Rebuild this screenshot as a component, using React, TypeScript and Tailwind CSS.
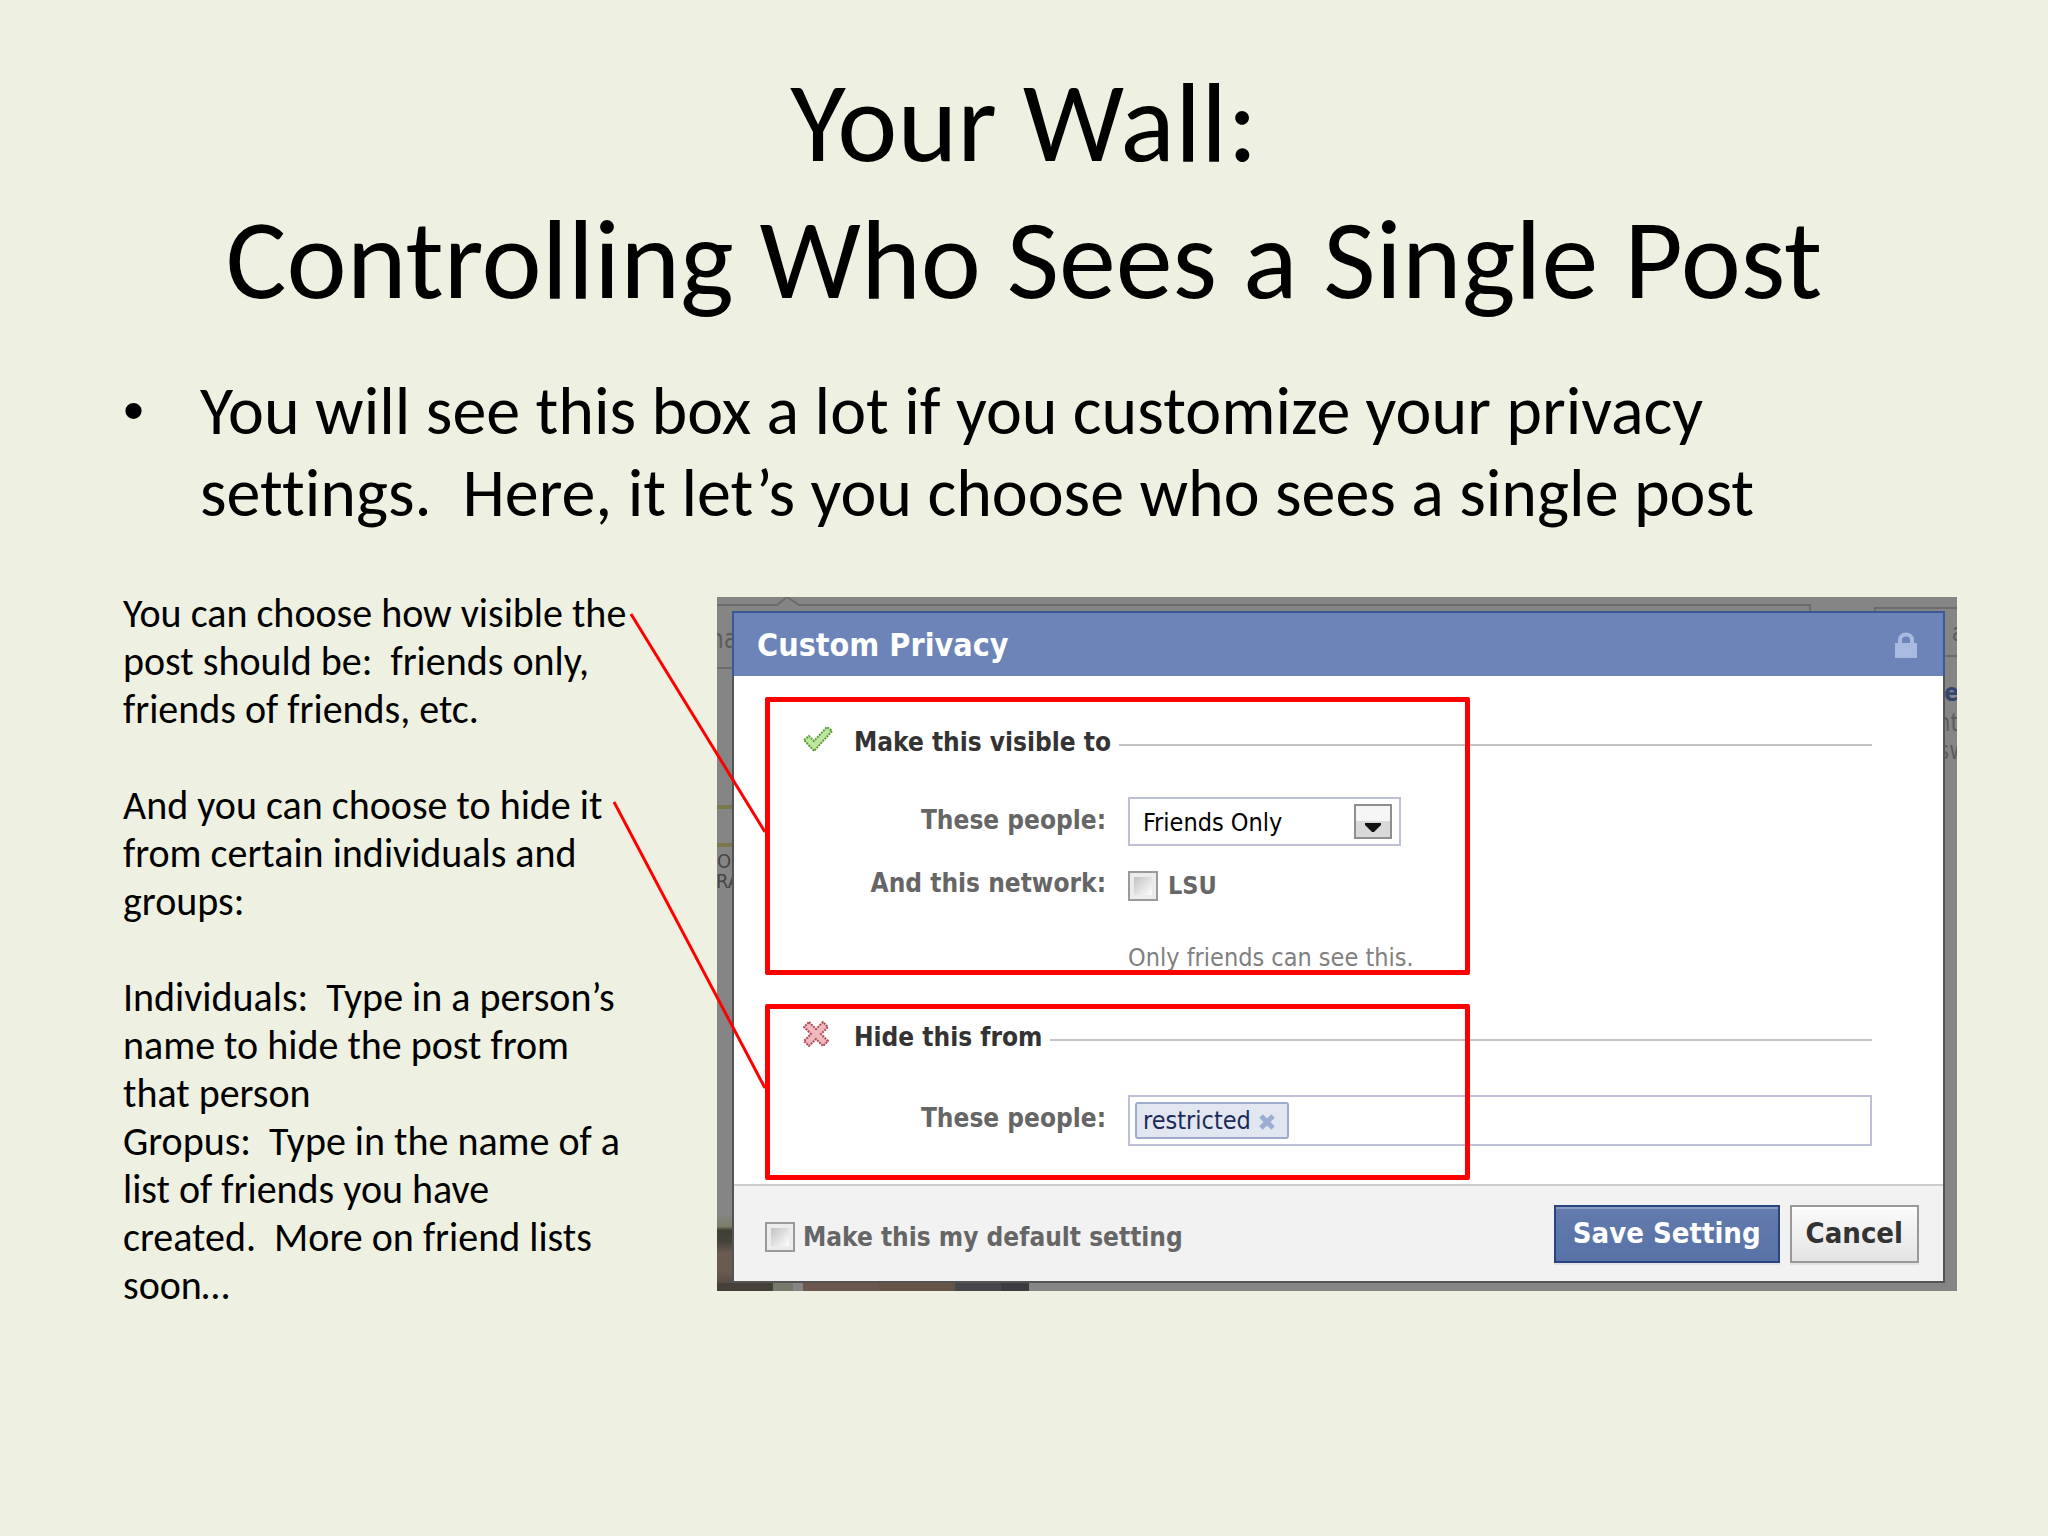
import type { ReactNode } from "react";

const SLIDE_FONT = "font-[Carlito,Calibri,Lato,sans-serif]";
const DIALOG_FONT = "font-['DejaVu_Sans_Condensed','DejaVu_Sans',Tahoma,sans-serif]";

const notes = [
  "You can choose how visible the",
  "post should be:  friends only,",
  "friends of friends, etc.",
  "",
  "And you can choose to hide it",
  "from certain individuals and",
  "groups:",
  "",
  "Individuals:  Type in a person’s",
  "name to hide the post from",
  "that person",
  "Gropus:  Type in the name of a",
  "list of friends you have",
  "created.  More on friend lists",
  "soon…",
];

function CheckIcon() {
  return (
    <svg className="h-[26px] w-[30px] shrink-0" viewBox="0 0 30 26" aria-hidden="true">
      <path d="M1 14 L6 10 L11 15 L24 1 L29 5 L11 25 Z" fill="#bfe6a0" />
      <path d="M1 14 L6 10 L11 15 L24 1 L29 5 L11 25 Z" fill="none" stroke="#5a9e35" strokeWidth="2" strokeDasharray="2 1" />
    </svg>
  );
}

function CrossIcon() {
  const d = "M6 1 L13 8 L20 1 L25 6 L18 13 L25 20 L20 25 L13 18 L6 25 L1 20 L8 13 L1 6 Z";
  return (
    <svg className="mr-1 h-[26px] w-[26px] shrink-0" viewBox="0 0 26 26" aria-hidden="true">
      <path d={d} fill="#efb9bd" />
      <path d={d} fill="none" stroke="#b04a55" strokeWidth="2" strokeDasharray="2 1" />
    </svg>
  );
}

function LockIcon() {
  return (
    <svg className="h-[26px] w-[22px]" viewBox="0 0 22 26" aria-hidden="true">
      <path d="M5 13 V8 C5 0.5 17 0.5 17 8 V13" fill="none" stroke="#a9bae0" strokeWidth="4" />
      <rect x="0" y="11" width="22" height="15" fill="#a9bae0" />
    </svg>
  );
}

function CheckBox({ id }: { id: string }) {
  return (
    <input
      id={id}
      type="checkbox"
      className="size-[30px] shrink-0 appearance-none border-2 border-[#9a9a9a] bg-[linear-gradient(135deg,#b4b4b4,#fafafa_80%)] shadow-[inset_0_0_0_4px_#ececec]"
    />
  );
}

function SectionHeading({ icon, children }: { icon: ReactNode; children: ReactNode }) {
  return (
    <div className="flex items-start pl-[38px]">
      {icon}
      <h3 className="ml-[21px] text-[26px] leading-8 font-bold text-[#333]">{children}</h3>
      <div className="mt-[18px] ml-2 h-[2px] flex-1 bg-[#c4c4c4]" />
    </div>
  );
}

/* Red frame over a section plus the leader line that ties it to the notes. */
function Callout({ width, height, top }: { width: number; height: number; top: string }) {
  return (
    <>
      <div className="pointer-events-none absolute inset-y-0 left-0 w-[705px] rounded-[2px] border-[5px] border-[#ff0000]" />
      <svg
        className={`pointer-events-none absolute right-full ${top}`}
        width={width}
        height={height}
        viewBox={`0 0 ${width} ${height}`}
        aria-hidden="true"
      >
        <line x1="1" y1="1" x2={width} y2={height - 1} stroke="#ff0000" strokeWidth="3" />
      </svg>
    </>
  );
}

/* Dimmed page that shows round the dialog. */
function Backdrop() {
  return (
    <div className="absolute inset-0 overflow-hidden bg-[#858585] text-[#5c5c5c]" aria-hidden="true">
      <svg className="absolute top-0 left-0 h-4 w-[1095px]" viewBox="0 0 1095 16">
        <path d="M0 8 H60 L70 0 L82 8 H1093 V16" fill="none" stroke="#6c6c6c" strokeWidth="2" />
      </svg>
      <div className="absolute top-[10px] right-0 h-4 w-[83px] border-t-2 border-l-2 border-[#6c6c6c]" />
      <span className="absolute top-[26px] left-[-8px] text-[26px] leading-8">na</span>
      <div className="absolute top-[70px] left-0 h-[2px] w-4 bg-[#6c6c6c]" />
      <div className="absolute top-[208px] left-0 h-1 w-4 bg-[#7c784e]" />
      <div className="absolute top-[246px] left-0 h-1 w-4 bg-[#7c784e]" />
      <span className="absolute top-[254px] left-0 text-[20px] leading-5 text-[#454545]">O</span>
      <span className="absolute top-[274px] left-[-1px] text-[20px] leading-5 text-[#454545]">RA</span>
      <span className="absolute top-[22px] right-[-8px] text-[24px] leading-7">a</span>
      <div className="absolute top-[58px] right-0 h-[2px] w-3 bg-[#6c6c6c]" />
      <span className="absolute top-[82px] right-[-2px] text-[24px] leading-7 font-bold text-[#34456e]">e</span>
      <span className="absolute top-[112px] right-[-2px] text-[24px] leading-7">nt</span>
      <span className="absolute top-[140px] right-[-10px] text-[24px] leading-7">sw</span>
      <div className="absolute bottom-0 left-0 h-[76px] w-4 bg-[linear-gradient(#858585,#7c7e68_15%,#3f3f36_20%,#45423a_35%,#6a5a50_50%,#6a5a50_75%,#4a443c)]" />
      <div className="absolute bottom-0 left-0 flex h-[8px]">
        <div className="w-[56px] bg-[#45413a]" />
        <div className="mr-[10px] w-[20px] bg-[#77786c]" />
        <div className="w-[76px] bg-[#6b5650]" />
        <div className="w-[76px] bg-[#665448]" />
        <div className="w-[46px] bg-[#47474b]" />
        <div className="w-[28px] bg-[#3c3c40]" />
      </div>
    </div>
  );
}

function PrivacyDialog() {
  return (
    <section className={`relative mt-[7px] min-w-0 flex-1 pt-[14px] pr-3 pb-2 pl-[15px] ${DIALOG_FONT}`}>
      <Backdrop />
      <form className="relative border-2 border-t-0 border-[#545454] bg-white">
        <header className="-mx-[2px] flex h-[65px] items-center justify-between border-2 border-b-0 border-[#3b5998] bg-[#6d84b8] pr-[26px] pl-[23px]">
          <h2 className="text-[32px] leading-10 font-bold text-white">Custom Privacy</h2>
          <LockIcon />
        </header>

        <div className="flex flex-col gap-[29px] pt-[21px] pr-[71px] pb-1 pl-[31px]">
          <div className="relative pt-[29px] pb-[2px]">
            <SectionHeading icon={<CheckIcon />}>Make this visible to</SectionHeading>
            <div className="mt-[39px] grid grid-cols-[341px_1fr] gap-x-[22px]">
              <label htmlFor="audience" className="mt-[7px] text-right text-[26px] leading-8 font-bold text-[#666]">
                These people:
              </label>
              <div className="relative w-[273px]">
                <select
                  id="audience"
                  className="block h-[49px] w-full appearance-none border-2 border-[#bdc0d6] bg-white pt-[2px] pl-[13px] text-[25px] text-black"
                >
                  <option>Friends Only</option>
                </select>
                <div className="pointer-events-none absolute top-[7px] right-[9px] flex h-[35px] w-[38px] items-end justify-center border-2 border-[#8f8f8f] bg-[linear-gradient(#f6f6f6_50%,#d9d9d9_50%)] pb-[5px]">
                  <svg className="h-[9px] w-4" viewBox="0 0 16 9" aria-hidden="true">
                    <path d="M0 0 H16 V2 L9 9 H7 L0 2 Z" fill="#111" />
                  </svg>
                </div>
              </div>
            </div>
            <div className="mt-[21px] grid h-[35px] grid-cols-[341px_1fr] gap-x-[22px]">
              <span className="text-right text-[26px] leading-8 font-bold text-[#666]">And this network:</span>
              <div className="flex items-center gap-[10px] self-end">
                <CheckBox id="network" />
                <label htmlFor="network" className="text-[25px] leading-8 font-bold text-[#666]">
                  LSU
                </label>
              </div>
            </div>
            <p className="mt-[41px] ml-[363px] text-[25px] leading-[30px] text-[#808080]">Only friends can see this.</p>
            <Callout width={135} height={220} top="top-[-84px]" />
          </div>

          <div className="relative pt-[17px] pb-[34px]">
            <SectionHeading icon={<CrossIcon />}>Hide this from</SectionHeading>
            <div className="mt-[42px] grid grid-cols-[341px_1fr] gap-x-[22px]">
              <label htmlFor="hidden-from" className="mt-[7px] text-right text-[26px] leading-8 font-bold text-[#666]">
                These people:
              </label>
              <div className="flex h-[51px] items-center gap-2 border-2 border-[#bdc0d6] px-[5px]">
                <span className="flex h-[37px] items-center gap-2 rounded-[3px] border-2 border-[#9daccc] bg-[#e2e6f0] pr-3 pl-[6px] text-[25px] leading-8 text-[#1c2a5a]">
                  restricted
                  <button type="button" aria-label="Remove restricted">
                    <svg className="mt-[2px] block size-4" viewBox="0 0 16 16" aria-hidden="true">
                      <path d="M2 2 L14 14 M14 2 L2 14" stroke="#9cadd2" strokeWidth="5" />
                    </svg>
                  </button>
                </span>
                <input id="hidden-from" type="text" className="h-full min-w-0 flex-1 bg-transparent text-[25px] outline-none" />
              </div>
            </div>
            <Callout width={152} height={288} top="top-[-203px]" />
          </div>
        </div>

        <footer className="flex h-[97px] items-center gap-[10px] border-t-2 border-[#cccccc] bg-[#f2f2f2] pr-6 pl-[31px]">
          <div className="flex flex-1 items-center gap-2 pt-[6px]">
            <CheckBox id="default-setting" />
            <label htmlFor="default-setting" className="text-[26px] leading-8 font-bold text-[#666]">
              Make this my default setting
            </label>
          </div>
          <button
            type="submit"
            className="h-[58px] border-2 border-[#29447e] bg-[linear-gradient(#637bad,#5872a7)] px-[17px] text-[29px] font-bold text-white shadow-[inset_0_2px_0_#8a9cc2,0_2px_0_#e2e2e2]"
          >
            Save Setting
          </button>
          <button
            type="button"
            className="h-[58px] border-2 border-[#999] bg-[linear-gradient(#fbfbfb,#e4e4e4)] px-[14px] text-[29px] font-bold text-[#333] shadow-[inset_0_2px_0_#fff,0_2px_0_#e2e2e2]"
          >
            Cancel
          </button>
        </footer>
      </form>
    </section>
  );
}

export default function App() {
  return (
    <main
      className={`min-h-screen bg-[#eef1e1] pt-[54px] pr-[91px] pl-[123px] text-black [font-variant-ligatures:none] ${SLIDE_FONT}`}
    >
      <h1 className="-ml-8 text-center text-[114px] leading-[137px]">
        Your Wall:
        <br />
        Controlling Who Sees a Single Post
      </h1>

      <ul className="mt-[42px] text-[68px] leading-[82px]">
        <li className="flex">
          <span className="w-[77px] shrink-0 font-['Liberation_Sans',Arial,sans-serif] text-[60px]">•</span>
          <p className="whitespace-pre-wrap">
            {"You will see this box a lot if you customize your privacy\nsettings.  Here, it let’s you choose who sees a single post"}
          </p>
        </li>
      </ul>

      <div className="mt-14 flex items-start">
        <div className="w-[594px] shrink-0 text-[40px] leading-[48px] whitespace-pre">
          {notes.map((line, i) => (
            <p key={i} className="min-h-[48px]">
              {line}
            </p>
          ))}
        </div>
        <PrivacyDialog />
      </div>
    </main>
  );
}
